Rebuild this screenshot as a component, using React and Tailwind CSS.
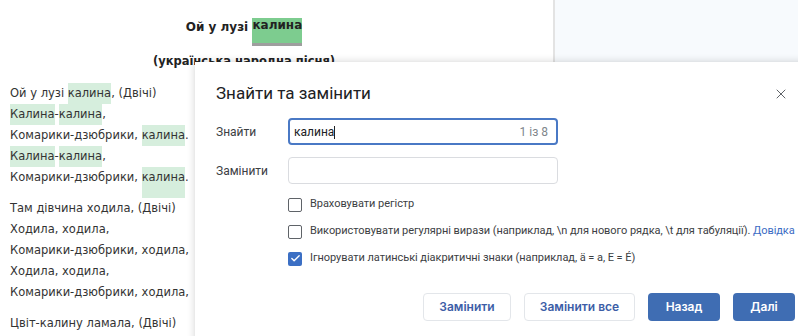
import { X, Check } from 'lucide-react';

const Hl = ({ children, extra = '' }) => (
  <span className={`inline-block bg-[#d6eedd] ${extra}`}>{children}</span>
);

const Line = ({ children, className = '' }) => (
  <div className={`h-[21px] leading-[21px] whitespace-nowrap ${className}`}>{children}</div>
);

const Checkbox = ({ checked, label }) => (
  <label className="flex items-center gap-[8px] h-[27px] whitespace-nowrap">
    {checked ? (
      <span className="w-[14px] h-[14px] rounded-[2px] bg-[#3b6fc4] flex items-center justify-center">
        <Check size={11} strokeWidth={3} className="text-white" />
      </span>
    ) : (
      <span className="w-[14px] h-[14px] rounded-[2px] border-[1.5px] border-[#5f6368]" />
    )}
    <span>{label}</span>
  </label>
);

const App = () => {
  return (
    <div className="relative w-[798px] h-[336px] overflow-hidden bg-white">
      {/* Document behind the dialog */}
      <div className="flex h-full">
        <div className="w-[553px] h-full text-[#333] text-[11.5px] font-['DejaVu_Sans',sans-serif]">
          <div className="w-[488px] text-center font-bold text-[12px] text-[#222] pt-[18px]">
            <span>Ой у лузі </span>
            <span className="inline-block align-top bg-[#7dcc8f] border-b-[3px] border-[#9e9e9e] h-[28px] leading-[14px]">калина</span>
          </div>
          <div className="w-[488px] text-center font-bold text-[#222] mt-[7px]">(українська народна пісня)</div>

          <div className="pl-[10px] mt-[13px]">
            <Line>Ой у лузі <Hl>калина</Hl>, (Двічі)</Line>
            <Line><Hl>Калина</Hl>-<Hl>калина</Hl>,</Line>
            <Line>Комарики-дзюбрики, <Hl>калина</Hl>.</Line>
            <Line><Hl>Калина</Hl>-<Hl>калина</Hl>,</Line>
            <Line className="h-[31px]">Комарики-дзюбрики, <Hl extra="h-[31px] align-top">калина</Hl>.</Line>
            <Line>Там дівчина ходила, (Двічі)</Line>
            <Line>Ходила, ходила,</Line>
            <Line>Комарики-дзюбрики, ходила,</Line>
            <Line>Ходила, ходила,</Line>
            <Line className="h-[31px]">Комарики-дзюбрики, ходила,</Line>
            <Line>Цвіт-калину ламала, (Двічі)</Line>
          </div>
        </div>
        <div className="w-[2px] h-[62px] bg-[#e3e3e3]" />
        <div className="flex-1 h-[62px] bg-[#f7fafd]" />
      </div>

      {/* Find and replace dialog */}
      <div className="absolute left-[195px] top-[62px] w-[620px] h-[300px] bg-white shadow-[0_0_8px_rgba(0,0,0,0.18)] font-['Roboto',sans-serif] text-[#3c4043]">
        <div className="flex items-center justify-between pl-[21px] pr-[26px] pt-[8px] h-[56px]">
          <h2 className="text-[17px] font-normal text-[#202124]">Знайти та замінити</h2>
          <X size={16} strokeWidth={1.5} className="text-[#5f6368]" />
        </div>

        <div className="pl-[21px] text-[12px]">
          <div className="flex items-center h-[27px]">
            <span className="w-[72px]">Знайти</span>
            <div className="w-[270px] h-[27px] rounded-[4px] border-2 border-[#4a79c5] flex items-center justify-between px-[4px]">
              <span className="text-[#202124]">калина<span className="inline-block w-px h-[13px] bg-[#202124] align-middle" /></span>
              <span className="text-[#80868b] pr-[4px]">1 із 8</span>
            </div>
          </div>
          <div className="flex items-center h-[27px] mt-[12px]">
            <span className="w-[72px]">Замінити</span>
            <div className="w-[270px] h-[27px] rounded-[4px] border border-[#dadce0]" />
          </div>

          <div className="pl-[72px] mt-[7px] text-[11px] tracking-[-0.05px]">
            <Checkbox label="Враховувати регістр" />
            <Checkbox
              label={
                <>
                  Використовувати регулярні вирази (наприклад, \n для нового рядка, \t для табуляції).{' '}
                  <span className="text-[#3b6bc4]">Довідка</span>
                </>
              }
            />
            <Checkbox checked label="Ігнорувати латинські діакритичні знаки (наприклад, ä = a, E = É)" />
          </div>
        </div>

        <div className="flex gap-[13px] pl-[228px] mt-[21px] font-['Inter',sans-serif] text-[12px] font-semibold">
          <button className="w-[88px] h-[28px] rounded-[4px] border border-[#e3e6ea] text-[#3d5ea7]">Замінити</button>
          <button className="w-[111px] h-[28px] rounded-[4px] border border-[#e3e6ea] text-[#3d5ea7]">Замінити все</button>
          <button className="w-[72px] h-[28px] rounded-[4px] bg-[#3f6db3] text-white">Назад</button>
          <button className="w-[62px] h-[28px] rounded-[4px] bg-[#3f6db3] text-white">Далі</button>
        </div>
      </div>
    </div>
  );
};

export default App;
